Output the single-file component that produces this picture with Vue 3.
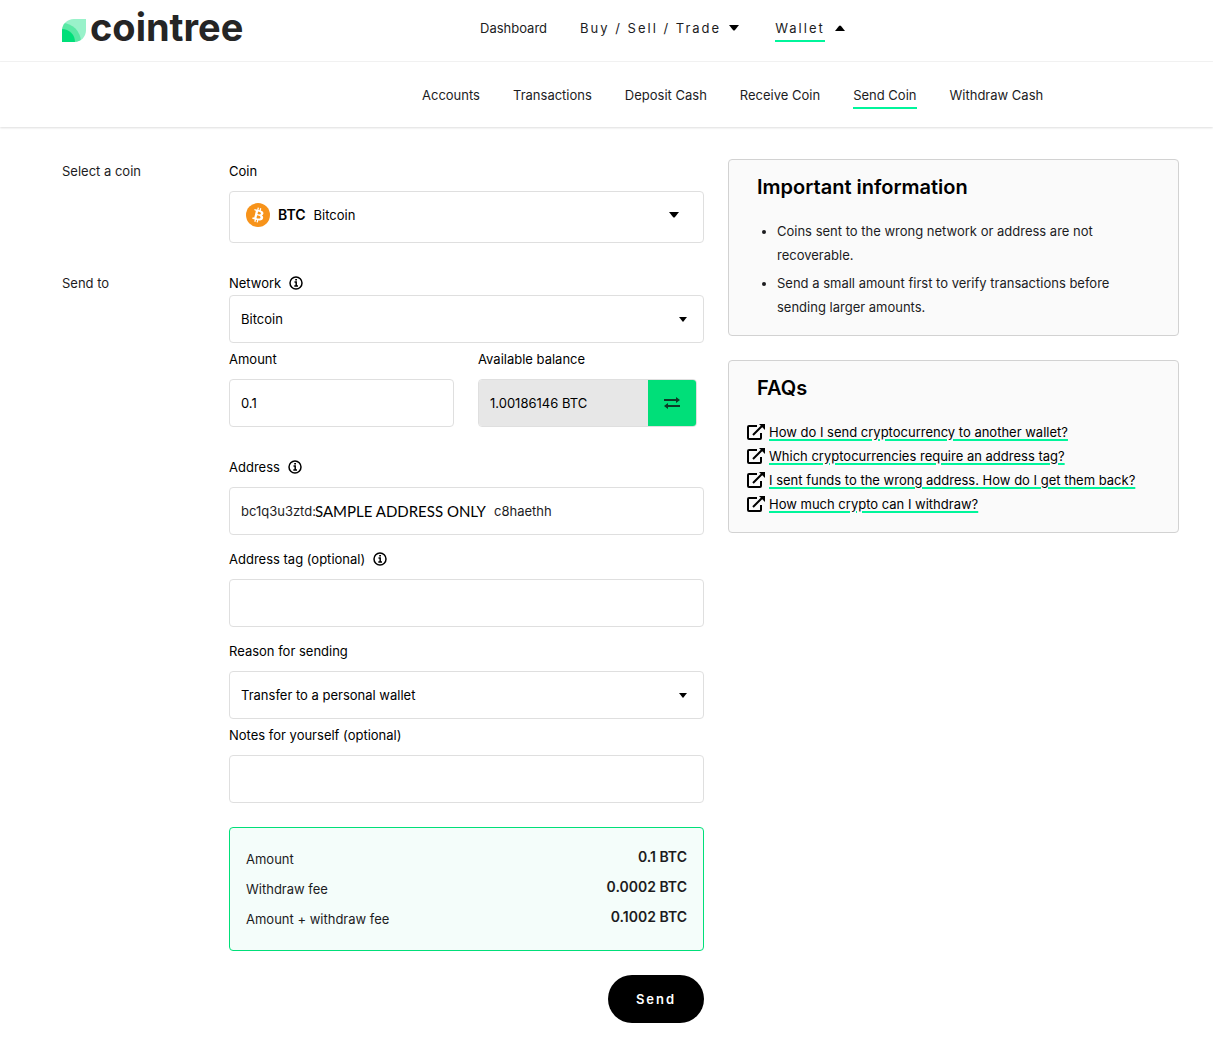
<script setup>
import { ref } from 'vue'

const subLinks = ['Accounts', 'Transactions', 'Deposit Cash', 'Receive Coin', 'Send Coin', 'Withdraw Cash']
const network = ref('Bitcoin')
const amount = ref('0.1')
const addressStart = ref('bc1q3u3ztd:')
const addressEnd = ref('c8haethh')
const tag = ref('')
const reason = ref('Transfer to a personal wallet')
const notes = ref('')
const summary = [
  { label: 'Amount', value: '0.1 BTC' },
  { label: 'Withdraw fee', value: '0.0002 BTC' },
  { label: 'Amount + withdraw fee', value: '0.1002 BTC' },
]
const faqs = [
  'How do I send cryptocurrency to another wallet?',
  'Which cryptocurrencies require an address tag?',
  'I sent funds to the wrong address. How do I get them back?',
  'How much crypto can I withdraw?',
]
</script>

<template>
  <div class="page">
    <header class="topbar">
      <a href="#" class="logo">
        <svg width="24" height="23" viewBox="0 0 24 23" aria-hidden="true">
          <clipPath id="leaf"><path d="M0 23V12C0 5 5 0 12 0H24V11C24 18 19 23 12 23Z" /></clipPath>
          <g clip-path="url(#leaf)">
            <rect width="24" height="23" fill="#99f2ca" />
            <circle cx="0" cy="23" r="19" fill="#5ae8a5" />
            <circle cx="0" cy="23" r="13" fill="#00df79" />
          </g>
        </svg>
        <span>cointree</span>
      </a>
      <nav class="main-nav">
        <a href="#">Dashboard</a>
        <a href="#" class="wide"><span>Buy / Sell / Trade</span>
          <svg width="10" height="6" viewBox="0 0 10 6"><path d="M0 0H10L6 5Q5 6 4 5Z" /></svg>
        </a>
        <a href="#" class="wide"><span class="active">Wallet</span>
          <svg width="10" height="6" viewBox="0 0 10 6"><path d="M0 6H10L6 1Q5 0 4 1Z" /></svg>
        </a>
      </nav>
    </header>
    <nav class="sub-nav">
      <a v-for="l in subLinks" :key="l" href="#"><span :class="{ active: l === 'Send Coin' }">{{ l }}</span></a>
    </nav>

    <main class="content">
      <form class="form" @submit.prevent>
        <div class="side">Select a coin</div>
        <div class="fields">
          <label for="coin">Coin</label>
          <button id="coin" type="button" class="box coin" aria-haspopup="listbox">
            <svg width="24" height="24" viewBox="0 0 32 32" aria-hidden="true">
              <circle cx="16" cy="16" r="16" fill="#f7931a" />
              <path fill="#fff" d="M23.2 14.02c.31-2.1-1.28-3.22-3.47-3.98l.71-2.84-1.73-.43-.69 2.76c-.45-.11-.92-.22-1.38-.32l.69-2.78-1.72-.43-.71 2.84c-.38-.09-.75-.17-1.1-.26l-2.38-.6-.46 1.85s1.28.29 1.25.31c.7.17.83.64.8 1l-.8 3.24-1.13 4.53c-.09.21-.3.53-.79.41.02.03-1.25-.31-1.25-.31l-.86 1.98 2.25.56 1.23.32-.72 2.87 1.73.43.71-2.84c.47.13.93.25 1.38.36l-.71 2.83 1.73.43.72-2.87c2.95.56 5.17.33 6.1-2.33.75-2.15-.04-3.39-1.59-4.2 1.13-.26 1.98-1 2.2-2.53Zm-3.95 5.54c-.53 2.15-4.15.99-5.32.7l.95-3.8c1.17.29 4.93.87 4.37 3.1Zm.54-5.57c-.49 1.95-3.5.96-4.47.72l.86-3.46c.97.25 4.12.7 3.61 2.74Z" />
            </svg>
            <strong>BTC</strong>
            <span class="coin-name">Bitcoin</span>
            <svg class="coin-caret" width="10" height="6" viewBox="0 0 10 6"><path d="M0 0H10L6 5Q5 6 4 5Z" /></svg>
          </button>
        </div>

        <div class="side">Send to</div>
        <div class="fields">
          <label for="network" class="tight">Network
            <svg class="info" viewBox="0 0 14 14"><circle cx="7" cy="7" r="6" /><path d="M5.5 6H7.2V10M5.3 10H9M6.2 3.7H8" /></svg>
          </label>
          <div class="select-wrap">
            <select id="network" v-model="network" class="box"><option>Bitcoin</option></select>
            <svg width="8" height="5" viewBox="0 0 8 5"><path d="M0 0H8L4 5Z" /></svg>
          </div>

          <div class="pair">
            <div>
              <label for="amount">Amount</label>
              <input id="amount" v-model="amount" class="box" type="text">
            </div>
            <div>
              <label for="balance">Available balance</label>
              <div class="balance">
                <input id="balance" class="box" type="text" value="1.00186146 BTC" readonly>
                <button type="button" aria-label="Use available balance">
                  <svg width="16" height="12" viewBox="0 0 16 12"><path d="M0 2H12V0L16 3L12 6V4H0ZM16 10H4V12L0 9L4 6V8H16Z" /></svg>
                </button>
              </div>
            </div>
          </div>

          <label for="address" class="after-pair">Address
            <svg class="info" viewBox="0 0 14 14"><circle cx="7" cy="7" r="6" /><path d="M5.5 6H7.2V10M5.3 10H9M6.2 3.7H8" /></svg>
          </label>
          <div class="box address">
            <input id="address" v-model="addressStart" class="address-start" type="text">
            <span class="sample">SAMPLE ADDRESS ONLY</span>
            <input v-model="addressEnd" class="address-end" type="text" aria-label="Address ending">
          </div>

          <label for="tag" class="after-input">Address tag (optional)
            <svg class="info" viewBox="0 0 14 14"><circle cx="7" cy="7" r="6" /><path d="M5.5 6H7.2V10M5.3 10H9M6.2 3.7H8" /></svg>
          </label>
          <input id="tag" v-model="tag" class="box" type="text">

          <label for="reason" class="after-input">Reason for sending</label>
          <div class="select-wrap">
            <select id="reason" v-model="reason" class="box"><option>Transfer to a personal wallet</option></select>
            <svg width="8" height="5" viewBox="0 0 8 5"><path d="M0 0H8L4 5Z" /></svg>
          </div>

          <label for="notes" class="after-select">Notes for yourself (optional)</label>
          <input id="notes" v-model="notes" class="box" type="text">

          <dl class="summary">
            <div v-for="row in summary" :key="row.label">
              <dt>{{ row.label }}</dt>
              <dd>{{ row.value }}</dd>
            </div>
          </dl>
          <button type="submit" class="send">Send</button>
        </div>
      </form>

      <aside>
        <section class="card">
          <h2>Important information</h2>
          <ul class="notices">
            <li>Coins sent to the wrong network or address are not recoverable.</li>
            <li>Send a small amount first to verify transactions before sending larger amounts.</li>
          </ul>
        </section>
        <section class="card">
          <h2>FAQs</h2>
          <ul class="faqs">
            <li v-for="q in faqs" :key="q">
              <svg width="18" height="16" viewBox="0 0 18 16" aria-hidden="true">
                <path d="M10 2H2Q1 2 1 3V14Q1 15 2 15H13Q14 15 14 14V9M6 11L15 2" fill="none" stroke="#000" stroke-width="2" />
                <path d="M12 0H18V6Z" />
              </svg>
              <a href="#">{{ q }}</a>
            </li>
          </ul>
        </section>
      </aside>
    </main>
  </div>
</template>

<style>
body { margin: 0; background: #fff; }
</style>

<style scoped>
.page, .page button, .page input, .page select {
  font-family: Inter, "Liberation Sans", sans-serif;
  font-size: 13px;
  line-height: 24px;
  color: #1c1c1e;
}
.page * { box-sizing: border-box; }
.page { min-height: 100vh; }
a { color: inherit; text-decoration: none; }

.topbar {
  display: flex;
  align-items: flex-start;
  height: 62px;
  padding: 0 62px;
  border-bottom: 1px solid #f3f3f3;
}
.logo {
  display: flex;
  align-items: center;
  gap: 4px;
  width: 418px;
  height: 54px;
  font-size: 38px;
  line-height: 48px;
  font-weight: 700;
  color: #252525;
}
.logo svg { margin-top: 6px; }
.main-nav { display: flex; gap: 33px; height: 56px; align-items: center; white-space: nowrap; }
.wide { display: flex; align-items: center; gap: 8px; letter-spacing: 2px; }
.wide + .wide { margin-left: 3px; }
.wide + .wide { gap: 10px; }
.active { position: relative; display: inline-block; }
.active::after {
  content: "";
  position: absolute;
  left: 0;
  right: 0;
  bottom: -2px;
  height: 2px;
  background: #00f59b;
}
.sub-nav {
  display: flex;
  gap: 33px;
  align-items: center;
  height: 65px;
  padding-left: 422px;
  white-space: nowrap;
  box-shadow: 0 1px 2px #dedede;
}

.content {
  display: grid;
  grid-template-columns: 642fr 451fr;
  gap: 24px;
  align-items: start;
  padding: 32px 34px 41px 62px;
}
.form { display: grid; grid-template-columns: 143px 1fr; gap: 28px 24px; }
.fields { display: flex; flex-direction: column; min-width: 0; }
label { display: flex; align-items: center; gap: 8px; margin-bottom: 8px; color: #000; }
label.tight { margin-bottom: 0; }
.after-pair { margin-top: 28px; }
.after-input { margin-top: 12px; }
.after-select { margin-top: 4px; }
.info { width: 14px; height: 14px; fill: none; stroke: #000; stroke-width: 1.5; }
.page .box {
  width: 100%;
  height: 48px;
  margin: 0;
  padding: 0 11px;
  border: 1px solid #dfdfdf;
  border-radius: 4px;
  background: #fff;
  color: #000;
  appearance: none;
}
.page .coin { display: flex; align-items: center; height: 52px; padding: 0 24px 4px 16px; text-align: left; }
.coin strong { margin: 0 8px; font-weight: 600; font-size: 14px; }
.coin-name { flex: 1; }
.select-wrap { position: relative; }
.select-wrap svg { position: absolute; right: 17px; top: 22px; pointer-events: none; }
.pair { display: grid; grid-template-columns: 225fr 219fr; gap: 24px; margin-top: 4px; padding-right: 7px; }
.balance { display: flex; border: 1px solid #dfdfdf; border-radius: 4px; overflow: hidden; }
.page .balance .box { flex: 1; min-width: 0; height: 46px; border: 0; border-radius: 0; background: #e7e7e7; }
.balance button { width: 48px; padding: 0; border: 0; background: #00df79; }
.balance svg { display: block; margin: 0 auto; fill: #0d3b26; }
.page .address { display: flex; align-items: center; }
.address input { padding: 0; border: 0; background: none; min-width: 0; }
.address-start { width: 74px; }
.address-end { flex: 1; }
.sample { margin-right: 8px; font-family: Lato, sans-serif; font-size: 15px; color: #000; white-space: nowrap; }

.summary { margin: 24px 0; padding: 16px; border: 1px solid #00df79; border-radius: 4px; background: #f4fdfa; }
.summary div { display: flex; justify-content: space-between; height: 30px; }
.summary dt { line-height: 30px; }
.summary dd { margin: 0; line-height: 26px; font-size: 14px; font-weight: 600; }
.page .send {
  align-self: flex-end;
  width: 96px;
  height: 48px;
  border: 0;
  border-radius: 24px;
  background: #000;
  color: #fff;
  font-weight: 600;
  letter-spacing: 2px;
}

aside { display: grid; gap: 24px; }
.card { padding: 13px 18px 16px; border: 1px solid #d2d2d2; border-radius: 4px; background: #fafafa; }
h2 { margin: 0 10px 18px; font-size: 20px; line-height: 28px; font-weight: 600; color: #000; }
ul { margin: 0; padding: 0; list-style: none; }
.notices { display: grid; gap: 4px; padding: 0 10px 0 30px; list-style: disc; }
.faqs li { display: flex; align-items: center; gap: 4px; }
.faqs a { color: #000; text-decoration: underline 2px #00f59b; text-underline-offset: 2px; }
</style>
